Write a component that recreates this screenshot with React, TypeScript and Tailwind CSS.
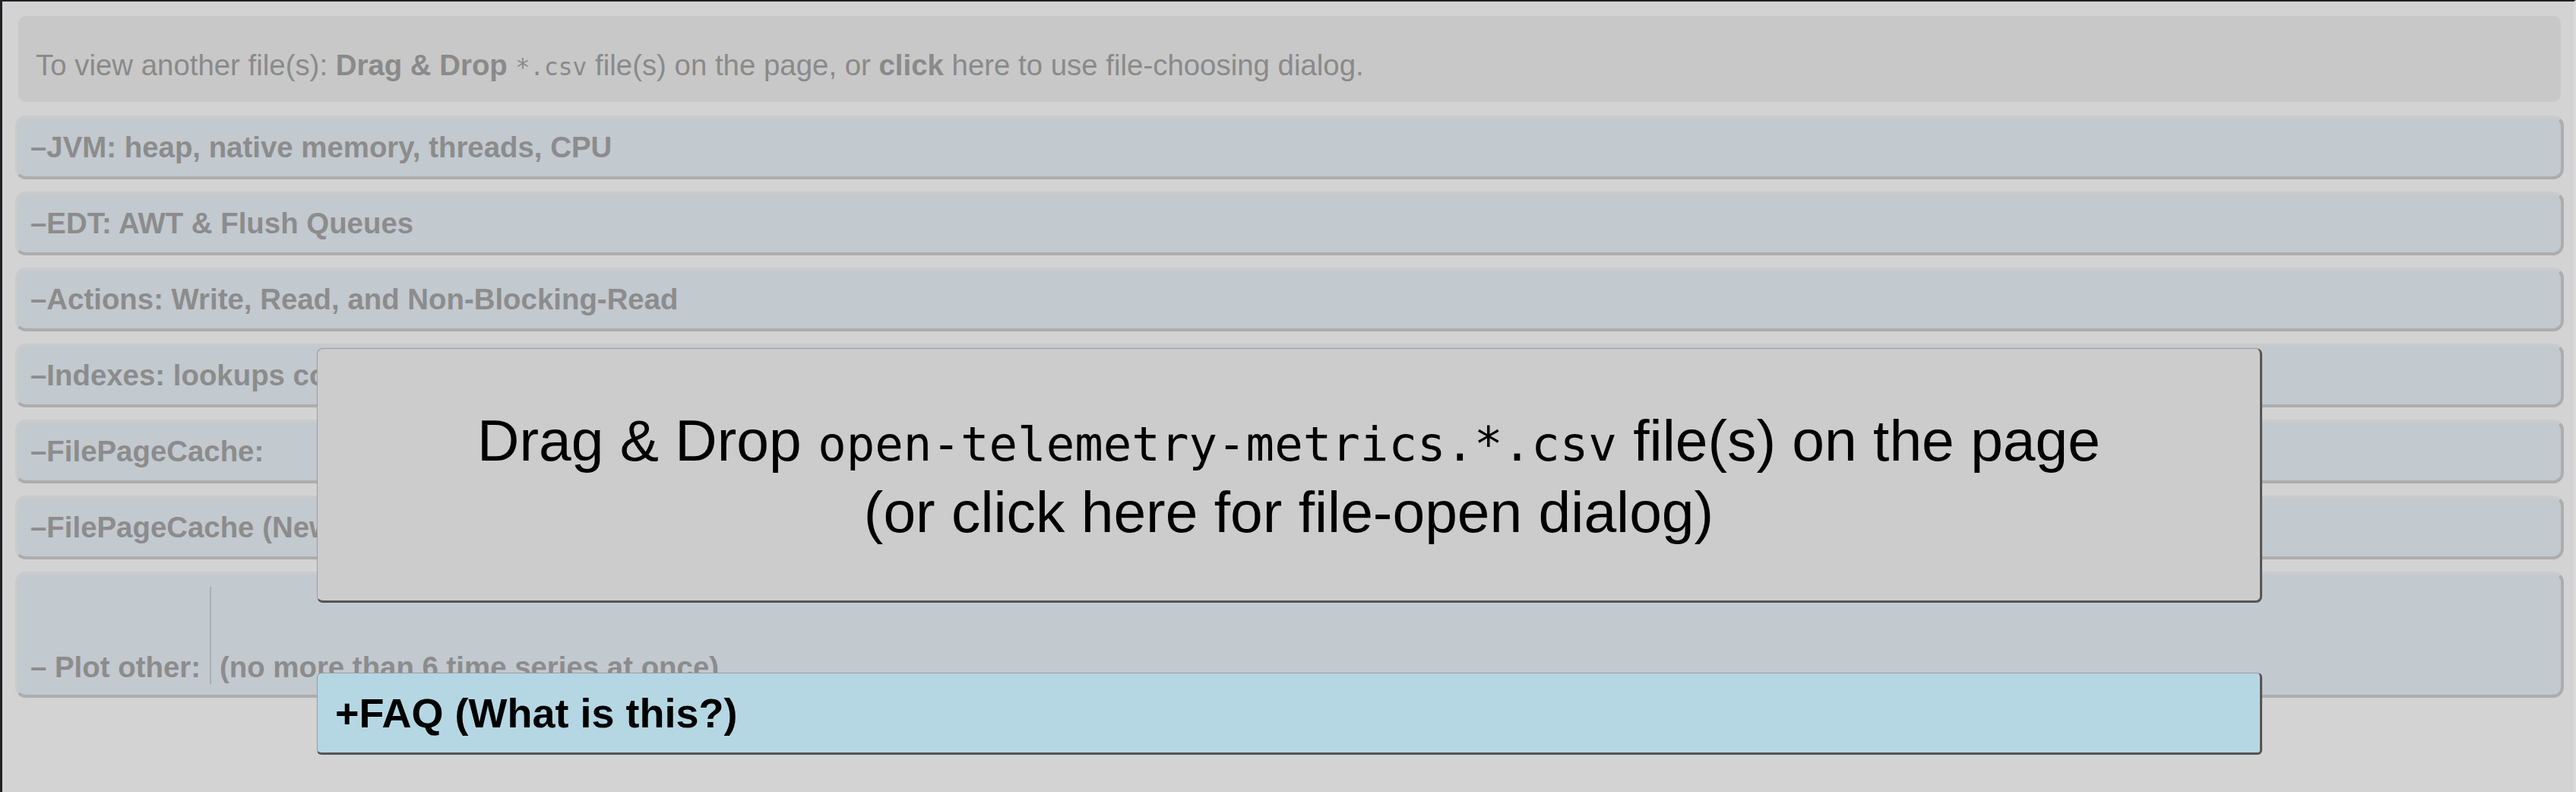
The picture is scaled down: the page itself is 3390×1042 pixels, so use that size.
const SANS = "font-['Liberation_Sans',Arial,sans-serif]";

const SECTIONS = [
  "–JVM: heap, native memory, threads, CPU",
  "–EDT: AWT & Flush Queues",
  "–Actions: Write, Read, and Non-Blocking-Read",
  "–Indexes: lookups count",
  "–FilePageCache:",
  "–FilePageCache (New)",
];

function SectionBar({ title }: { title: string }) {
  return (
    <div className="rounded-[14px] bg-[#c2c9cf] border-t-[4px] border-l-[3px] border-b-[4px] border-r-[4px] border-t-[#c9cacb] border-l-[#c9cacb] border-b-[#adadad] border-r-[#adadad] pl-[17px] py-4">
      <div className="text-[38.4px] leading-[44px] font-bold text-[#8c8c8c] whitespace-nowrap">
        {title}
      </div>
    </div>
  );
}

export default function App() {
  return (
    <div
      className={`${SANS} relative w-[3390px] h-[1042px] overflow-hidden bg-[#d3d3d3] border-l-[3px] border-t-[2px] border-r-[3px] border-l-[#202025] border-t-[#202025] border-r-[#dadada]`}
    >
      <div className="flex flex-col pl-[17px] pr-[13px] pt-[19px]">
        {/* file info */}
        <div className="mx-1 rounded-[10px] bg-[#c8c8c8] pt-[43px] pb-[24px] pl-[23px] text-[38.4px] leading-[44px] text-[#8a8a8a] whitespace-nowrap">
          To view another file(s): <b>Drag &amp; Drop</b>{" "}
          <span className="font-['DejaVu_Sans_Mono',monospace] text-[31.2px]">*.csv</span>{" "}
          file(s) on the page, or <b>click</b> here to use file-choosing dialog.
        </div>

        <div className="mt-[18px] flex flex-col gap-4">
          {SECTIONS.map((s) => (
            <SectionBar key={s} title={s} />
          ))}

          {/* plot other */}
          <div className="rounded-[14px] bg-[#c2c9cf] border-t-[4px] border-l-[3px] border-b-[4px] border-r-[4px] border-t-[#c9cacb] border-l-[#c9cacb] border-b-[#adadad] border-r-[#adadad] pl-[17px] pt-4 pb-[14px]">
            <div className="flex items-end h-[128px] text-[38.4px] leading-[44px] font-bold text-[#8c8c8c] whitespace-nowrap">
              <span className="mr-3">– Plot other:</span>
              <div className="h-full flex items-end border-l-2 border-[#a9afb3] pl-[11px]">
                (no more than 6 time series at once)
              </div>
            </div>
          </div>
        </div>
      </div>

      {/* drop zone overlay */}
      <div className="absolute left-[414px] top-[456px] w-[2560px] h-[335px] flex items-center justify-center rounded-[8px] bg-[#cccccc] border-t border-l border-t-[#9c9c9c] border-l-[#9c9c9c] border-b-[3px] border-r-[3px] border-b-[#555555] border-r-[#555555] text-black text-center text-[76.8px] leading-[88px]">
        <div className="pt-[2px]">
          Drag &amp; Drop{" "}
          <span className="font-['DejaVu_Sans_Mono',monospace] text-[62.4px]">
            open-telemetry-metrics.*.csv
          </span>{" "}
          file(s) on the page
          <br />
          (or click here for file-open dialog)
        </div>
      </div>

      {/* FAQ */}
      <div className="absolute left-[414px] top-[883px] w-[2560px] h-[108px] flex items-center rounded-[6px] bg-[#b5d7e3] border-t border-l border-t-[#9c9c9c] border-l-[#9c9c9c] border-b-[3px] border-r-[3px] border-b-[#555555] border-r-[#555555] pl-[23px] text-black font-bold text-[54px] leading-[60px]">
        +FAQ (What is this?)
      </div>
    </div>
  );
}
